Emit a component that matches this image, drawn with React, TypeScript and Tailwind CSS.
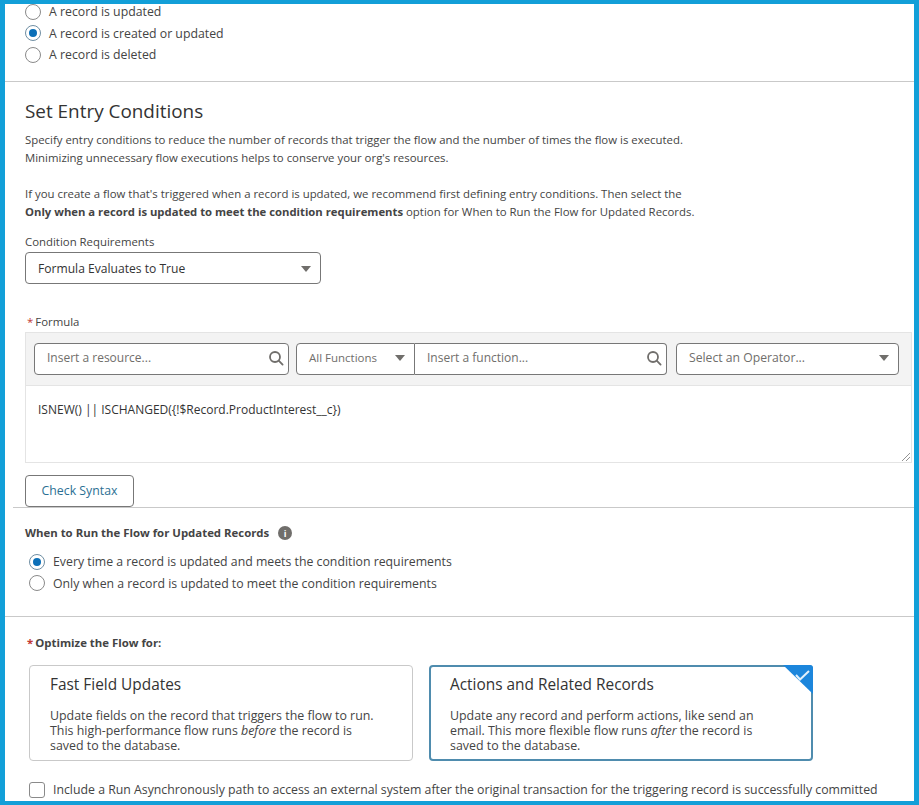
import React from 'react';

function Radio({ checked, label }: { checked?: boolean; label: string }) {
    return (
        <div className="flex h-[21.5px] items-center">
            <span className={`flex h-4 w-4 shrink-0 items-center justify-center rounded-full border bg-white ${checked ? 'border-[#6f8ea3]' : 'border-[#8a8a8a]'}`}>
                {checked && <span className="h-2 w-2 rounded-full bg-[#0b6fb8]" />}
            </span>
            <span className="ml-2 pt-[1px] text-[12.3px] text-[#444]">{label}</span>
        </div>
    );
}

function SearchIcon() {
    return (
        <svg width="16" height="16" viewBox="0 0 16 16" fill="none" stroke="#706e6b" strokeWidth="1.8" className="shrink-0">
            <circle cx="7" cy="7" r="5" />
            <path d="M10.7 10.7 L14.6 14.6" strokeLinecap="round" />
        </svg>
    );
}

function Caret() {
    return (
        <svg width="12" height="8" viewBox="0 0 12 8" className="shrink-0">
            <path d="M1 1 H11 L6 7 Z" fill="#706e6b" />
        </svg>
    );
}

function OptionCard({ title, selected, children }: { title: string; selected?: boolean; children: React.ReactNode }) {
    return (
        <div className={`relative h-[96px] w-[384px] rounded ${selected ? 'border-2 border-[#4f8cae] pl-[19px] pt-[7px]' : 'border border-[#c9c9c9] pl-[20px] pt-[8px]'}`}>
            <div className="text-[15.4px] leading-[22px] text-[#333]">{title}</div>
            <div className="mt-[12px] whitespace-nowrap text-[12.4px] leading-[15px] text-[#444]">{children}</div>
            {selected && (
                <svg width="30" height="29" viewBox="0 0 30 29" className="absolute -right-[2px] -top-[2px]">
                    <path d="M0 0 H27 Q30 0 30 3 V29 Z" fill="#1c86dc" />
                    <path d="M13 10 L17 14.5 L26 6" fill="none" stroke="#e2f0fb" strokeWidth="2" />
                </svg>
            )}
        </div>
    );
}

export default function App() {
    return (
        <div className="h-[805px] w-[919px] overflow-hidden border-x-[5px] border-y-[4px] border-x-[#129fd8] border-y-[#129fd8] bg-white font-['Open_Sans',sans-serif] text-[11.4px] text-[#444]">
            {/* Trigger options */}
            <div className="-mt-[3px] pl-[20px]">
                <Radio label="A record is updated" />
                <Radio checked label="A record is created or updated" />
                <Radio label="A record is deleted" />
            </div>
            <div className="mt-[15.5px] border-t border-[#c9c9c9]" />

            {/* Entry conditions */}
            <div className="pl-[20px] pr-[2px]">
                <h2 className="mt-[16px] text-[18.9px] leading-[26px] text-[#333]">Set Entry Conditions</h2>
                <p className="mt-[7px] leading-[18px]">
                    Specify entry conditions to reduce the number of records that trigger the flow and the number of times the flow is executed.
                    <br />
                    Minimizing unnecessary flow executions helps to conserve your org's resources.
                </p>
                <p className="mt-[18px] leading-[18px]">
                    If you create a flow that's triggered when a record is updated, we recommend first defining entry conditions. Then select the
                    <br />
                    <b className="text-[11.3px]">Only when a record is updated to meet the condition requirements</b> option for When to Run the Flow for Updated Records.
                </p>
                <div className="mt-[13px] leading-[16px]">Condition Requirements</div>
                <div className="mt-[2px] flex h-[32px] w-[296px] items-center justify-between rounded border border-[#777] pl-[12px] pr-[8px] pt-[2px] text-[12.1px] text-[#333]">
                    Formula Evaluates to True
                    <Caret />
                </div>

                <div className="ml-[2px] mt-[30px] flex h-[16px] gap-[2px] leading-[15px]"><span className="text-[#c23934]">*</span> Formula</div>
                <div className="mt-[2px] h-[131px] w-[887px] border border-[#e4e4e4]">
                    <div className="flex h-[53px] items-center border-b border-[#e4e4e4] bg-[#f3f3f3] pl-[8px] text-[12px] text-[#706e6b]">
                        <div className="flex h-[32px] w-[255px] items-center justify-between rounded border border-[#777] bg-white pb-[2px] pl-[12px] pr-[4px]">
                            Insert a resource...
                            <SearchIcon />
                        </div>
                        <div className="ml-[7px] flex h-[32px] w-[119px] items-center justify-between rounded-l border border-[#777] bg-white pb-[3px] pl-[12px] pr-[8px] text-[11.5px]">
                            All Functions
                            <Caret />
                        </div>
                        <div className="flex h-[32px] w-[252px] items-center justify-between rounded-r border border-l-0 border-[#777] bg-white pb-[2px] pl-[12px] pr-[4px]">
                            Insert a function...
                            <SearchIcon />
                        </div>
                        <div className="ml-[9px] flex h-[32px] w-[223px] items-center justify-between rounded border border-[#777] bg-white pb-[2px] pl-[12px] pr-[8px] text-[12.2px]">
                            Select an Operator...
                            <Caret />
                        </div>
                    </div>
                    <div className="relative h-[76px] pl-[12px] pt-[16px] text-[12px] leading-[16px] text-[#333]">
                        {'ISNEW() || ISCHANGED({!$Record.ProductInterest__c})'}
                        <svg width="8" height="8" viewBox="0 0 8 8" className="absolute bottom-[1px] right-[1px]">
                            <path d="M0 8 L8 0 M4 8 L8 4" stroke="#777" strokeWidth="0.8" />
                        </svg>
                    </div>
                </div>
                <button className="mt-[12px] block h-[32px] w-[109px] rounded border border-[#777] text-[12.3px] text-[#2b6f93]">Check Syntax</button>
            </div>
            <div className="ml-[8px] border-t border-[#c9c9c9]" />

            {/* When to run */}
            <div className="pl-[20px]">
                <div className="mt-[17px] flex items-center leading-[16px]">
                    <b>When to Run the Flow for Updated Records</b>
                    <span className="ml-[9px] flex h-[14px] w-[14px] items-center justify-center rounded-full bg-[#706e6b] text-[9px] font-bold leading-none text-white">i</span>
                </div>
                <div className="ml-[4px] mt-[10px]">
                    <Radio checked label="Every time a record is updated and meets the condition requirements" />
                    <Radio label="Only when a record is updated to meet the condition requirements" />
                </div>
            </div>
            <div className="mt-[22px] border-t border-[#c9c9c9]" />

            {/* Optimize */}
            <div className="pl-[22px]">
                <div className="mt-[18px] flex gap-[2px] leading-[16px]"><span className="font-bold text-[#c23934]">*</span> <b>Optimize the Flow for:</b></div>
                <div className="ml-[2px] mt-[14px] flex gap-[16px]">
                    <OptionCard title="Fast Field Updates">
                        Update fields on the record that triggers the flow to run.
                        <br />
                        This high-performance flow runs <i>before</i> the record is
                        <br />
                        saved to the database.
                    </OptionCard>
                    <OptionCard selected title="Actions and Related Records">
                        Update any record and perform actions, like send an
                        <br />
                        email. This more flexible flow runs <i>after</i> the record is
                        <br />
                        saved to the database.
                    </OptionCard>
                </div>
                <div className="ml-[2px] mt-[20px] flex items-center">
                    <span className="h-4 w-4 shrink-0 rounded-[3px] border border-[#8a8a8a]" />
                    <span className="ml-2 whitespace-nowrap text-[12.3px]">Include a Run Asynchronously path to access an external system after the original transaction for the triggering record is successfully committed</span>
                </div>
            </div>
        </div>
    );
}
